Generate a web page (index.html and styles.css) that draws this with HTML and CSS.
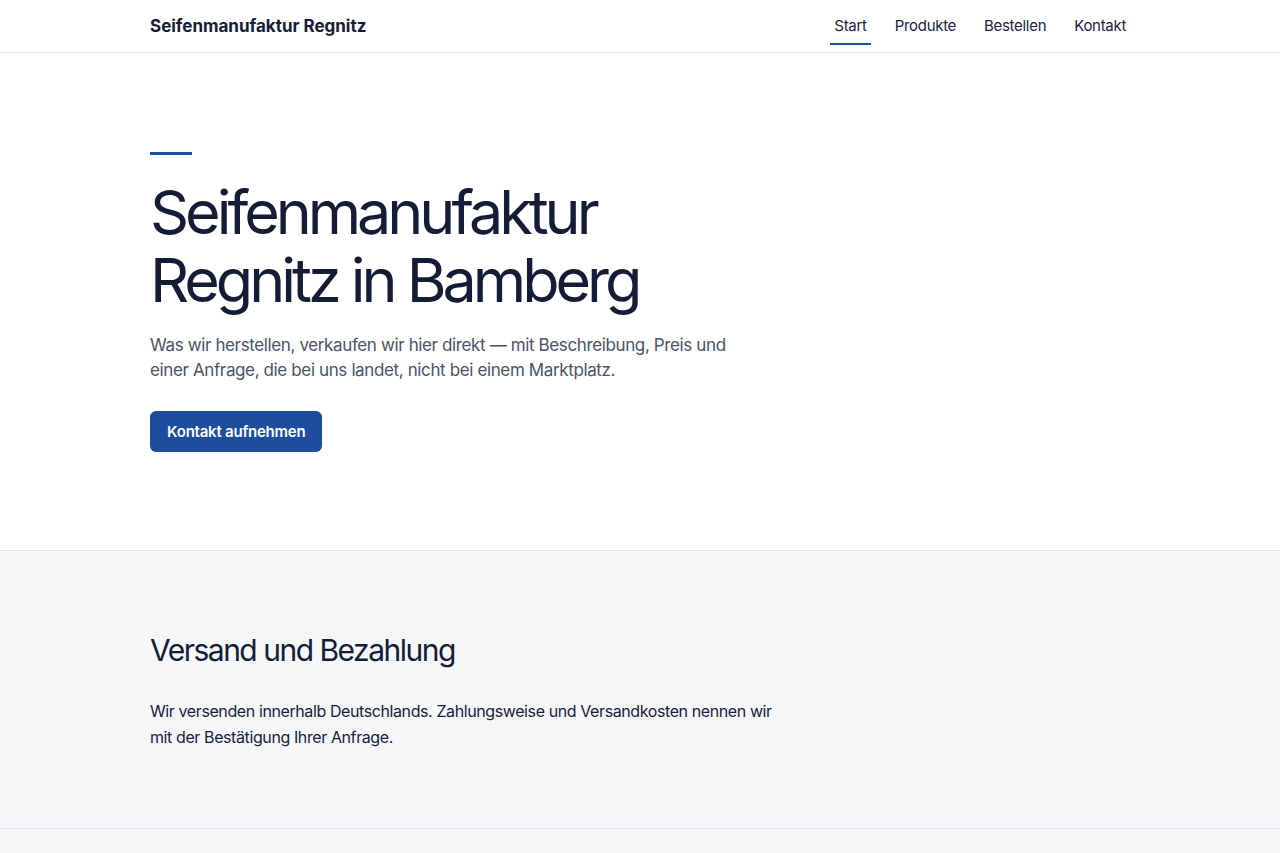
FILE: index.html
```html
<!DOCTYPE html>
<html lang="de">
<head>
    <meta charset="UTF-8">
    <meta name="viewport" content="width=device-width, initial-scale=1.0">
    <title>Seifenmanufaktur Regnitz</title>
    <link rel="stylesheet" href="styles.css">
</head>
<body>
    <header class="site-header">
        <div class="container header-inner">
            <a href="#" class="brand">Seifenmanufaktur Regnitz</a>
            <nav class="nav">
                <a href="#" class="nav-link active">Start</a>
                <a href="#" class="nav-link">Produkte</a>
                <a href="#" class="nav-link">Bestellen</a>
                <a href="#" class="nav-link">Kontakt</a>
            </nav>
        </div>
    </header>

    <section class="hero">
        <div class="container">
            <div class="accent"></div>
            <h1>Seifenmanufaktur<br>Regnitz in Bamberg</h1>
            <p class="lead">Was wir herstellen, verkaufen wir hier direkt — mit Beschreibung, Preis und einer Anfrage, die bei uns landet, nicht bei einem Marktplatz.</p>
            <a href="#" class="button">Kontakt aufnehmen</a>
        </div>
    </section>

    <section class="info">
        <div class="container">
            <h2>Versand und Bezahlung</h2>
            <p>Wir versenden innerhalb Deutschlands. Zahlungsweise und Versandkosten nennen wir mit der Bestätigung Ihrer Anfrage.</p>
        </div>
    </section>

    <footer class="site-footer"></footer>
</body>
</html>
```

FILE: styles.css
```css
body {
    font-family: Inter, "Noto Sans", sans-serif;
    margin: 0;
    color: #16213e;
    background-color: #fff;
}
a {
    color: inherit;
    text-decoration: none;
}
.container {
    max-width: 980px;
    margin: 0 auto;
}
.site-header {
    border-bottom: 1px solid #e2e5ea;
}
.header-inner {
    height: 52px;
    display: flex;
    align-items: center;
    justify-content: space-between;
}
.brand {
    font-size: 17px;
    font-weight: 700;
    color: #141c36;
}
.nav {
    display: flex;
    gap: 20px;
}
.nav-link {
    font-size: 15px;
    line-height: 18px;
    letter-spacing: -0.02em;
    padding: 9px 4px 8px;
    border-bottom: 2px solid transparent;
    color: #1a2340;
}
.nav-link.active {
    border-bottom-color: #1d4e9e;
}
.hero {
    padding: 99px 0 98px;
    border-bottom: 1px solid #e2e5ea;
}
.accent {
    width: 42px;
    height: 3px;
    background-color: #1d4e9e;
    margin-bottom: 23px;
}
h1 {
    font-size: 61px;
    line-height: 68px;
    font-weight: 400;
    letter-spacing: -0.066em;
    margin: 0;
    color: #141c36;
}
.lead {
    font-size: 17px;
    line-height: 25px;
    letter-spacing: -0.022em;
    color: #4a5368;
    max-width: 600px;
    margin: 19px 0 28px;
}
.button {
    display: inline-block;
    background-color: #1d4e9e;
    color: #fff;
    font-size: 15px;
    font-weight: 600;
    line-height: 21px;
    letter-spacing: -0.015em;
    padding: 10px 17px;
    border-radius: 6px;
}
.info {
    background-color: #f6f7f9;
    padding: 80px 0 78px;
    border-bottom: 1px solid #e2e5ea;
}
h2 {
    font-size: 30px;
    line-height: 38px;
    font-weight: 400;
    letter-spacing: -0.05em;
    margin: 0 0 29px;
    color: #141c36;
}
.info p {
    font-size: 16px;
    line-height: 26px;
    letter-spacing: -0.025em;
    max-width: 640px;
    margin: 0;
    color: #16213e;
}
.site-footer {
    background-color: #f6f7f9;
    height: 40px;
}
```
